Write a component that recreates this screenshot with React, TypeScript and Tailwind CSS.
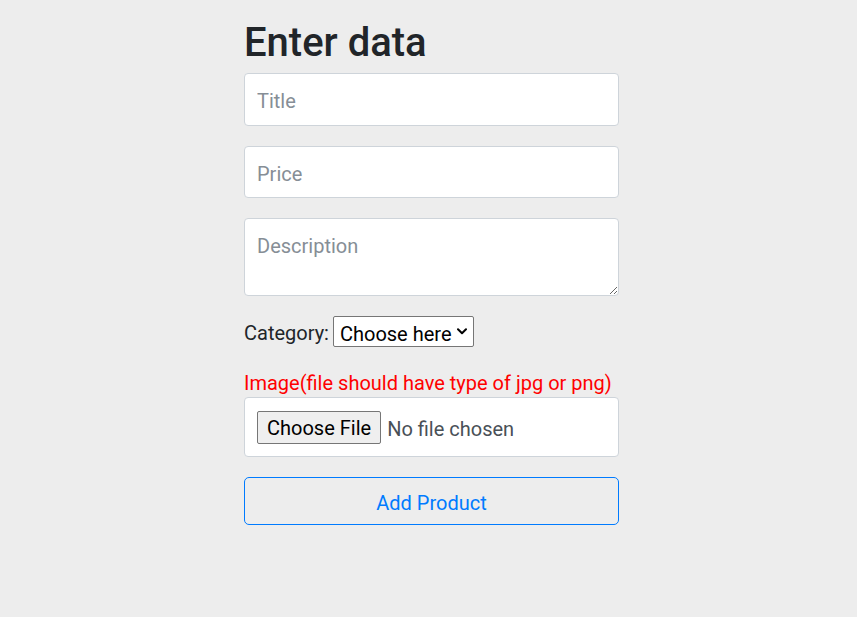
export default function App() {
  const font = { fontFamily: 'Roboto, "Open Sans", sans-serif' };
  return (
    <div className="min-h-[617px] w-full bg-[#ededed] text-[#212529]" style={font}>
      <div className="ml-[244px] w-[375px] pt-[19px]">
        <h1 className="mb-[6px] text-[40px] font-medium leading-[48px] text-[#212529]">Enter data</h1>
        <form className="flex flex-col" onSubmit={(e) => e.preventDefault()}>
          <input
            type="text"
            placeholder="Title"
            className="h-[53px] w-full rounded-[4px] border border-[#ced4da] bg-white px-[12px] pt-[3px] text-[20px] text-[#495057] placeholder:text-[#868e96] outline-none"
          />
          <input
            type="text"
            placeholder="Price"
            className="mt-[20px] h-[52px] w-full rounded-[4px] border border-[#ced4da] bg-white px-[12px] pt-[3px] text-[20px] text-[#495057] placeholder:text-[#868e96] outline-none"
          />
          <textarea
            placeholder="Description"
            className="mt-[20px] block h-[78px] w-full rounded-[4px] border border-[#ced4da] bg-white px-[12px] pt-[12px] pb-[8px] text-[20px] leading-[30px] text-[#495057] placeholder:text-[#868e96] outline-none"
          />
          <div className="mt-[20px] flex h-[31px] items-center">
            <label className="mr-[4px] pt-[3px] text-[20px] leading-[30px] text-[#212529]">Category:</label>
            <span className="relative inline-flex">
              <select className="h-[31px] appearance-none rounded-[2px] border border-[#767676] bg-white pl-[6px] pr-[21px] pt-[2px] text-[20px] text-black outline-none">
                <option>Choose here</option>
                <option>Electronics</option>
                <option>Clothing</option>
              </select>
              <svg
                className="pointer-events-none absolute right-[7px] top-[12px]"
                width="10"
                height="7"
                viewBox="0 0 10 7"
                fill="none"
              >
                <path d="M1 1.2 L5 5.2 L9 1.2" stroke="#000" strokeWidth="2" strokeLinecap="round" strokeLinejoin="round" />
              </svg>
            </span>
          </div>
          <label className="mt-[20px] pt-[2px] text-[20px] leading-[28px] text-[#ff0000]">
            Image(file should have type of jpg or png)
          </label>
          <div className="flex h-[60px] w-full items-center rounded-[4px] border border-[#ced4da] bg-white px-[12px]">
            <button
              type="button"
              className="h-[33px] rounded-[2px] border border-[#767676] bg-[#efefef] px-[9px] pt-[2px] text-[20px] leading-[29px] text-black"
            >
              Choose File
            </button>
            <span className="ml-[6px] pt-[3px] text-[20px] text-[#495057]">No file chosen</span>
          </div>
          <button
            type="submit"
            className="mt-[20px] h-[48px] w-full rounded-[5px] border border-[#007bff] pt-[3px] text-[20px] text-[#007bff]"
          >
            Add Product
          </button>
        </form>
      </div>
    </div>
  );
}
